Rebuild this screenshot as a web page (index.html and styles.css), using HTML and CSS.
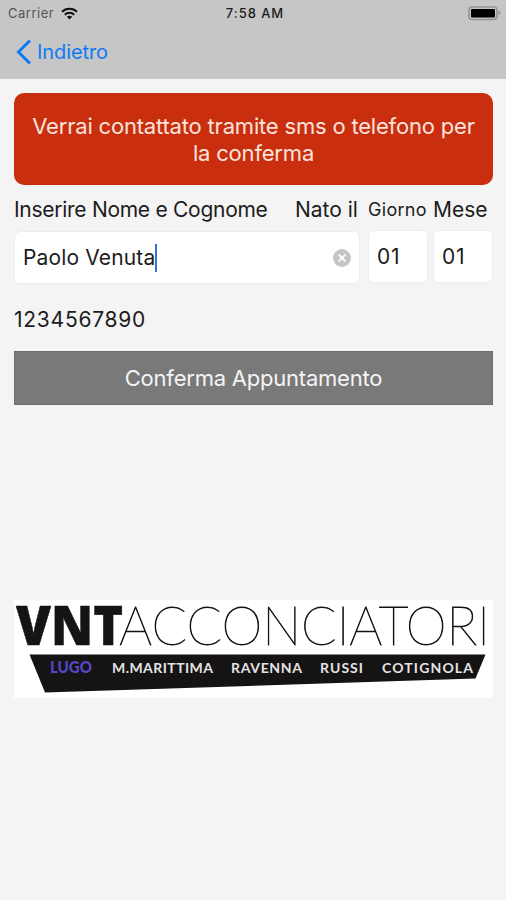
FILE: index.html
```html
<!DOCTYPE html>
<html lang="it">

<head>
    <meta charset="UTF-8">
    <meta name="viewport" content="width=device-width, initial-scale=1.0">
    <title>Conferma Appuntamento</title>
    <link rel="stylesheet" href="styles.css">
</head>

<body>
    <header class="top-bar">
        <div class="status-bar">
            <div class="carrier">
                <span>Carrier</span>
                <svg width="17" height="13" viewBox="0 0 17 13" fill="none" stroke="#111" stroke-width="2">
                    <path d="M1 4.800C5 .6 12 .6 16 4.800" />
                    <path d="M3.800 7.700C6.400 5.100 10.600 5.100 13.200 7.700" />
                    <path d="M8.500 12.500L5.800 9.700C7.300 8.400 9.700 8.400 11.200 9.700Z" fill="#111" stroke="none" />
                </svg>
            </div>
            <span class="time">7:58 AM</span>
            <svg class="battery" width="34" height="15" viewBox="0 0 34 15">
                <rect x="1" y="1" width="28" height="12.500" rx="3" fill="#c6c6c6" stroke="#959595" stroke-width="1.600" />
                <rect x="3" y="3" width="24" height="8.500" rx="1" fill="#000" />
                <path d="M30.500 5C33 5.500 33 8.500 30.500 9Z" fill="#959595" />
            </svg>
        </div>
        <a href="#" class="back-link">
            <svg width="16" height="26" viewBox="0 0 16 26" fill="none" stroke="#0f7af5" stroke-width="3">
                <path d="M14 1.500L2.500 13L14 24.500" />
            </svg>
            <span>Indietro</span>
        </a>
    </header>

    <main class="container">
        <div class="notice">Verrai contattato tramite sms o telefono per la conferma</div>

        <form>
            <div class="labels">
                <label class="label-name">Inserire Nome e Cognome</label>
                <span class="label-born">Nato il</span>
                <label class="label-day">Giorno</label>
                <label class="label-month">Mese</label>
            </div>
            <div class="fields">
                <div class="field field-name">
                    <span class="value">Paolo Venuta</span><span class="caret"></span>
                    <svg class="clear" width="18" height="18" viewBox="0 0 18 18">
                        <circle cx="9" cy="9" r="9" fill="#c5c5c5" />
                        <path d="M5.600 5.600L12.400 12.400M12.400 5.600L5.600 12.400" stroke="#fff" stroke-width="1.900" />
                    </svg>
                </div>
                <div class="field field-date">01</div>
                <div class="field field-date">01</div>
            </div>
            <div class="phone">1234567890</div>
            <button type="button" class="btn">Conferma Appuntamento</button>
        </form>

        <svg class="logo" width="479" height="98" viewBox="0 0 479 98">
            <rect width="479" height="98" fill="#fff" />
            <text class="logo-bold" x="2" y="45" textLength="107" lengthAdjust="spacingAndGlyphs">VNT</text>
            <text class="logo-thin" x="105" y="45" textLength="371" lengthAdjust="spacingAndGlyphs">ACCONCIATORI</text>
            <path d="M15.500 54.500H471.500L461.500 78.500L31 92.500Z" fill="#151314" />
            <text class="logo-active" x="36" y="73" textLength="42" lengthAdjust="spacingAndGlyphs">LUGO</text>
            <g class="logo-city">
                <text x="98" y="73" textLength="101">M.MARITTIMA</text>
                <text x="217" y="73" textLength="71">RAVENNA</text>
                <text x="306" y="73" textLength="43">RUSSI</text>
                <text x="368" y="73" textLength="91">COTIGNOLA</text>
            </g>
        </svg>
    </main>
</body>

</html>
```

FILE: styles.css
```css
* {
    box-sizing: border-box;
}

body {
    font-family: Inter, "Liberation Sans", sans-serif;
    background-color: #f4f4f4;
    color: #1c1c1c;
    margin: 0;
    min-height: 900px;
}

.top-bar {
    height: 79px;
    background-color: #c6c6c6;
}

.status-bar {
    display: grid;
    grid-template-columns: 1fr auto 1fr;
    align-items: center;
    height: 26px;
    padding: 0 4px 0 8px;
    font-size: 13px;
}

.carrier {
    display: flex;
    align-items: center;
    gap: 7px;
    color: #555;
    letter-spacing: 0.5px;
}

.time {
    font-weight: 500;
    letter-spacing: 0.95px;
}

.battery {
    justify-self: end;
}

.back-link {
    display: inline-flex;
    align-items: center;
    gap: 5px;
    height: 52px;
    padding-left: 16px;
    color: #0f7af5;
    font-size: 20px;
    letter-spacing: -0.1px;
    text-decoration: none;
}

.container {
    padding: 14px 13px 0 14px;
}

.notice {
    display: flex;
    align-items: center;
    height: 92px;
    padding: 2px 14px 0;
    border-radius: 10px;
    background-color: #c92f0f;
    color: #fbe3dc;
    font-size: 22px;
    line-height: 27px;
    letter-spacing: -0.19px;
    text-align: center;
}

.labels {
    display: flex;
    align-items: center;
    height: 45px;
    padding-top: 3px;
    font-size: 21px;
    white-space: nowrap;
}

.label-name {
    width: 281px;
    letter-spacing: -0.28px;
}

.label-born {
    width: 73px;
}

.label-day {
    width: 65px;
    font-size: 18px;
    letter-spacing: 0.3px;
}

.fields {
    display: flex;
    align-items: flex-start;
    height: 54px;
    font-size: 21px;
}

.field {
    display: flex;
    align-items: center;
    background-color: #fff;
    border: 1px solid #ededed;
    border-radius: 6px;
}

.field-name {
    width: 346px;
    height: 53px;
    margin: 1px 8px 0 0;
    padding: 0 8px;
    letter-spacing: 0.15px;
}

.caret {
    width: 2px;
    height: 28px;
    background-color: #3a6fd8;
}

.clear {
    margin-left: auto;
}

.field-date {
    width: 60px;
    height: 53px;
    padding-left: 8px;
    letter-spacing: 0.8px;
}

.field-date + .field-date {
    margin-left: 5px;
}

.phone {
    display: flex;
    align-items: center;
    height: 67px;
    padding-top: 3px;
    font-size: 21px;
    letter-spacing: 0.75px;
}

.btn {
    display: block;
    width: 100%;
    height: 54px;
    padding: 0;
    border: 1px solid #6d6d6d;
    background-color: #797979;
    color: #f4f4f4;
    font-family: inherit;
    font-size: 22px;
    letter-spacing: -0.22px;
}

.logo {
    display: block;
    margin-top: 195px;
}

.logo-bold {
    font-family: "Open Sans", sans-serif;
    font-size: 54px;
    font-weight: 800;
    fill: #151314;
    stroke: #151314;
    stroke-width: 0.5px;
}

.logo-thin {
    font-family: Lato, sans-serif;
    font-size: 53px;
    font-weight: 200;
    fill: #151314;
    stroke: #151314;
    stroke-width: 0.8px;
}

.logo-active {
    font-family: Lato, sans-serif;
    font-size: 16px;
    font-weight: 900;
    fill: #5548c4;
}

.logo-city {
    font-family: Lato, sans-serif;
    font-size: 14px;
    font-weight: 700;
    fill: #e4e4e4;
}
```
